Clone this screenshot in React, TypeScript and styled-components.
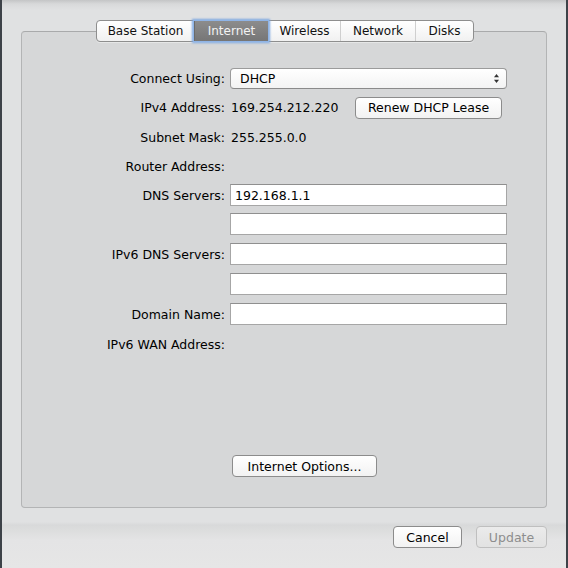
import { createGlobalStyle, styled } from "styled-components";

const GlobalStyle = createGlobalStyle`
  html, body { margin: 0; padding: 0; }
  body {
    width: 568px;
    height: 568px;
    overflow: hidden;
    font-family: "DejaVu Sans", "Liberation Sans", sans-serif;
    font-size: 12.5px;
    color: #000;
  }
`;

const tabs = [
  { name: "Base Station", width: 97 },
  { name: "Internet", width: 74 },
  { name: "Wireless", width: 72 },
  { name: "Network", width: 75 },
  { name: "Disks", width: 58 },
];

interface Field {
  label: string;
  kind: "popup" | "text" | "input" | "ipv4";
  value?: string;
  height: number;
}

const fields: Field[] = [
  { label: "Connect Using:", kind: "popup", value: "DHCP", height: 30 },
  { label: "IPv4 Address:", kind: "ipv4", value: "169.254.212.220", height: 29 },
  { label: "Subnet Mask:", kind: "text", value: "255.255.0.0", height: 30 },
  { label: "Router Address:", kind: "text", value: "", height: 29 },
  { label: "DNS Servers:", kind: "input", value: "192.168.1.1", height: 28 },
  { label: "", kind: "input", height: 30 },
  { label: "IPv6 DNS Servers:", kind: "input", height: 30 },
  { label: "", kind: "input", height: 30 },
  { label: "Domain Name:", kind: "input", height: 30 },
  { label: "IPv6 WAN Address:", kind: "text", value: "", height: 30 },
];

const App = () => {
  return (
    <>
      <GlobalStyle />
      <Window>
        <GroupBox>
          <TabBar>
            {tabs.map((t) => (
              <Tab key={t.name} $width={t.width} $selected={t.name === "Internet"}>
                {t.name}
              </Tab>
            ))}
          </TabBar>
          <Form>
            {fields.map((f, i) => (
              <Row key={i} $height={f.height}>
                <Label>{f.label}</Label>
                {f.kind === "popup" && (
                  <Popup>
                    <span>{f.value}</span>
                    <svg width="7" height="11" viewBox="0 0 7 11">
                      <path d="M3.5 1 L6 4.2 H1 Z" fill="#333" />
                      <path d="M3.5 10 L6 6.8 H1 Z" fill="#333" />
                    </svg>
                  </Popup>
                )}
                {f.kind === "text" && <Value>{f.value}</Value>}
                {f.kind === "ipv4" && (
                  <ValueGroup>
                    <Value>{f.value}</Value>
                    <PushButton $width={147}>Renew DHCP Lease</PushButton>
                  </ValueGroup>
                )}
                {f.kind === "input" && <TextInput>{f.value}</TextInput>}
              </Row>
            ))}
          </Form>
          <OptionsRow>
            <PushButton $width={145}>Internet Options...</PushButton>
          </OptionsRow>
        </GroupBox>
        <Footer>
          <PushButton $width={69}>Cancel</PushButton>
          <PushButton $width={71} $disabled>
            Update
          </PushButton>
        </Footer>
      </Window>
    </>
  );
};

const Window = styled.div`
  box-sizing: border-box;
  width: 568px;
  height: 568px;
  padding: 31px 21px 0 21px;
  background: linear-gradient(
    to bottom,
    #c4c5c6 0px,
    #d8d9da 4px,
    #e0e1e2 10px,
    #e0e1e2 522px,
    #d8d9da 525px,
    #dcdddd 530px,
    #e4e4e5 540px,
    #e6e6e6 568px
  );
  border-left: 2px solid #3d4248;
  border-right: 2px solid #3d4248;
  display: flex;
  flex-direction: column;
`;

const GroupBox = styled.div`
  box-sizing: border-box;
  margin-left: -2px;
  margin-right: -2px;
  height: 477px;
  background: #d6d7d8;
  border: 1px solid #b3b4b5;
  border-top-color: #a9aaab;
  border-radius: 4px;
  display: flex;
  flex-direction: column;
`;

const TabBar = styled.div`
  align-self: flex-start;
  margin: -12px 0 0 74px;
  display: flex;
  height: 22px;
  box-sizing: border-box;
  border: 1px solid #8e8e8e;
  border-radius: 4px;
  background: linear-gradient(to bottom, #ffffff, #f1f1f1);
  box-shadow: 0 1px 0 rgba(255, 255, 255, 0.4);
  font-size: 12px;
`;

const Tab = styled.div<{ $selected?: boolean; $width: number }>`
  box-sizing: border-box;
  width: ${(p) => p.$width}px;
  display: flex;
  align-items: center;
  justify-content: center;
  line-height: 20px;
  color: ${(p) => (p.$selected ? "#f2f2f2" : "#111")};
  border-left: 1px solid #cfcfcf;
  &:first-child {
    border-left: none;
  }
  ${(p) =>
    p.$selected &&
    `
    background: linear-gradient(to bottom, #8c8c8c, #767676);
    border-left-color: #6a6a6a;
    box-shadow: 0 0 0 1px #8fb4e6, 0 0 2px 2px #7aa6e0;
    position: relative;
  `}
`;

const Form = styled.div`
  margin-top: 21px;
  display: flex;
  flex-direction: column;
`;

const Row = styled.div<{ $height: number }>`
  display: grid;
  grid-template-columns: 203px 277px;
  column-gap: 5px;
  align-items: center;
  height: ${(p) => p.$height}px;
`;

const Label = styled.div`
  text-align: right;
  white-space: nowrap;
`;

const Value = styled.div`
  padding-left: 1px;
  white-space: nowrap;
`;

const ValueGroup = styled.div`
  display: flex;
  align-items: center;
  justify-content: space-between;
  padding-right: 5px;
`;

const Popup = styled.div`
  box-sizing: border-box;
  height: 21px;
  display: flex;
  align-items: center;
  justify-content: space-between;
  padding: 0 6px 0 9px;
  border: 1px solid #9b9b9b;
  border-bottom-color: #8a8a8a;
  border-radius: 4px;
  background: linear-gradient(to bottom, #ffffff, #f3f3f3);
`;

const TextInput = styled.div`
  box-sizing: border-box;
  height: 22px;
  display: flex;
  align-items: center;
  padding: 0 4px;
  background: #fff;
  border: 1px solid #a6a6a6;
  border-top-color: #8f8f8f;
`;

const PushButton = styled.div<{ $width: number; $disabled?: boolean }>`
  box-sizing: border-box;
  width: ${(p) => p.$width}px;
  height: 22px;
  display: flex;
  align-items: center;
  justify-content: center;
  border-radius: 4px;
  white-space: nowrap;
  border: 1px solid ${(p) => (p.$disabled ? "#bfbfbf" : "#8c8c8c")};
  color: ${(p) => (p.$disabled ? "#8d8d8d" : "#000")};
  background: ${(p) =>
    p.$disabled
      ? "linear-gradient(to bottom, #ebebeb, #e2e2e2)"
      : "linear-gradient(to bottom, #ffffff, #f2f2f2)"};
`;

const OptionsRow = styled.div`
  margin-top: 96px;
  padding-left: 210px;
  display: flex;
`;

const Footer = styled.div`
  margin-top: 18px;
  display: flex;
  justify-content: flex-end;
  gap: 14px;
  margin-right: -2px;
`;

export default App;
